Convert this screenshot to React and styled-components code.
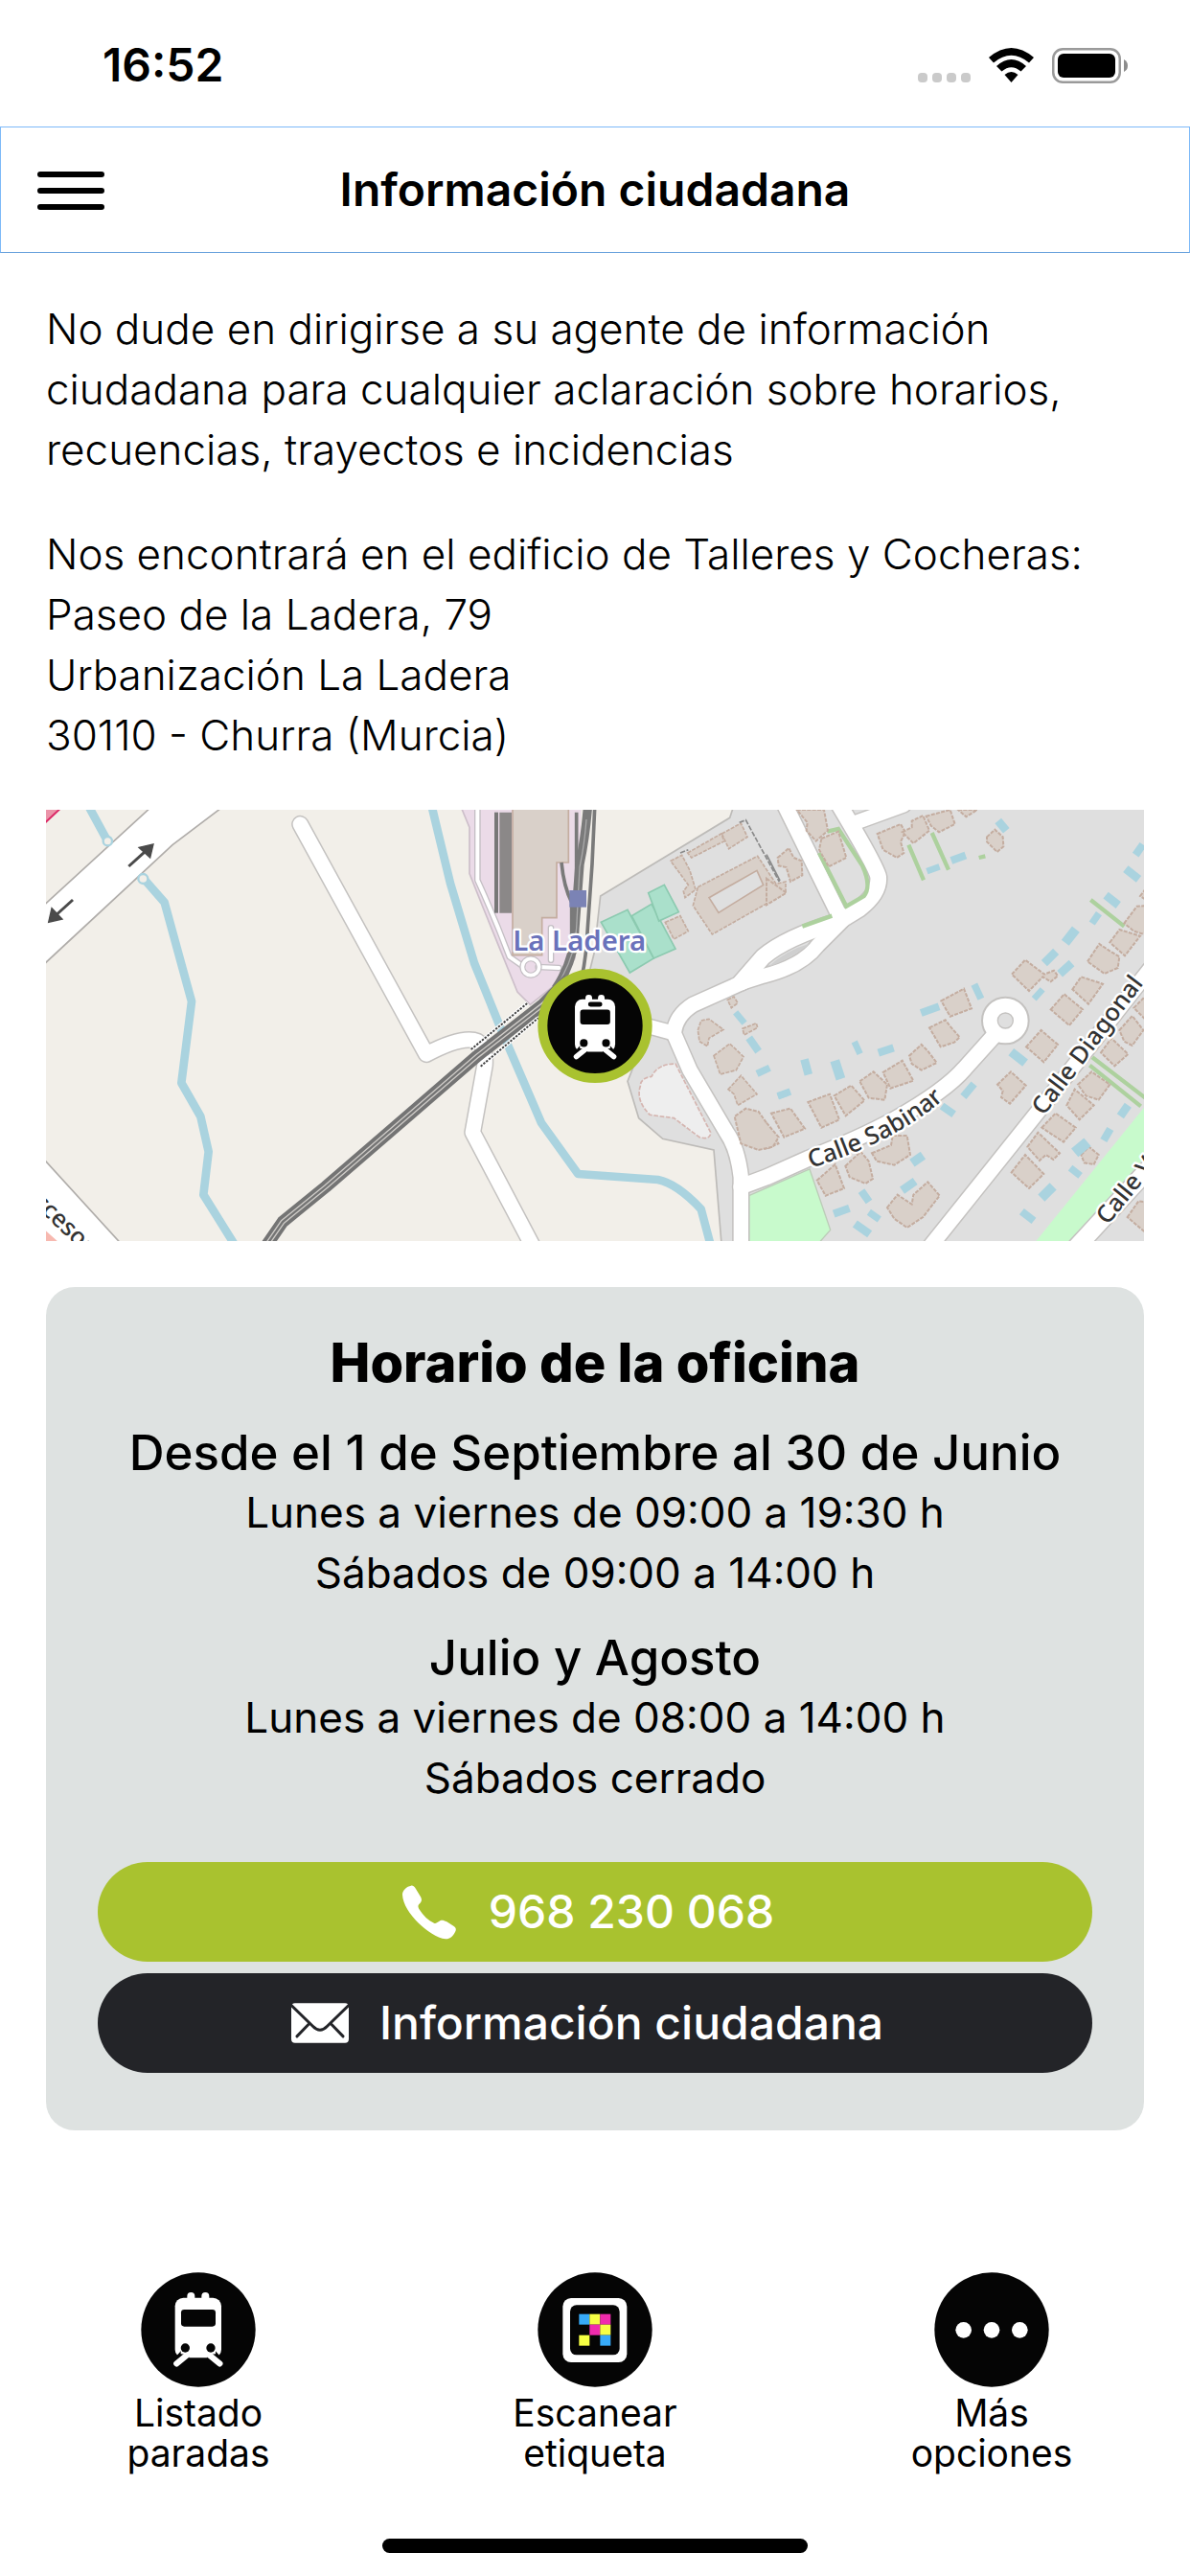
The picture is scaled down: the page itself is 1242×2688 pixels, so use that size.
import React from "react";
import styled, { createGlobalStyle } from "styled-components";

const GlobalStyle = createGlobalStyle`
  *, *::before, *::after { box-sizing: border-box; }
  body {
    margin: 0;
    background: #fff;
    color: #000;
    font-family: Inter, "Liberation Sans", sans-serif;
  }
`;

const Page = styled.div`
  display: flex;
  flex-direction: column;
  min-height: 100vh;
`;

const StatusBar = styled.div`
  display: flex;
  align-items: center;
  justify-content: space-between;
  height: 132px;
  padding: 4px 65px 0 107px;
`;

const Clock = styled.time`
  font-size: 48px;
  line-height: 60px;
  font-weight: 600;
`;

const Header = styled.header`
  display: grid;
  grid-template-columns: 112px 1fr 112px;
  align-items: center;
  height: 132px;
  border: 1px solid #7db9f8;
  border-bottom-color: #68a1dc;
`;

const MenuButton = styled.button`
  display: flex;
  align-items: center;
  justify-content: flex-end;
  height: 100%;
  padding: 2px 3px 0 0;
  border: 0;
  background: none;
  color: #000;
`;

const Title = styled.h1`
  margin: 0;
  text-align: center;
  font-size: 48px;
  line-height: 64px;
  font-weight: 600;
`;

const Content = styled.main`
  padding: 48px;
`;

const Paragraph = styled.p`
  margin: 0 0 46px;
  font-size: 44px;
  line-height: 63px;
  font-weight: 300;
`;

const Address = styled(Paragraph).attrs({ as: "address" })`
  font-style: normal;
`;

const MapView = styled.svg`
  display: block;
  width: 100%;
  height: 450px;
  margin-bottom: 48px;
`;

const StreetName = styled.text`
  font-family: "Noto Sans", "DejaVu Sans", sans-serif;
  font-size: 76px;
  font-weight: 500;
  fill: ${(p) => p.$fill || "#333"};
  stroke: #fff;
  stroke-width: 14px;
  stroke-linejoin: round;
  paint-order: stroke;
`;

const StationName = styled(StreetName)`
  font-size: 88px;
  font-weight: 600;
`;

const Card = styled.section`
  padding: 46px 54px 60px;
  border-radius: 30px;
  background: #dee2e1;
  text-align: center;
`;

const CardTitle = styled.h2`
  margin: 0 0 29px;
  font-size: 56px;
  line-height: 66px;
  font-weight: 800;
`;

const Season = styled.div`
  margin-bottom: 25px;
`;

const SeasonTitle = styled.h3`
  margin: 0;
  font-size: 51px;
  line-height: 63px;
  font-weight: 500;
`;

const Hours = styled.p`
  margin: 0;
  font-size: 44px;
  line-height: 63px;
  font-weight: 400;
`;

const Actions = styled.div`
  display: flex;
  flex-direction: column;
  gap: 12px;
  padding-top: 31px;
`;

const ActionLink = styled.a`
  display: flex;
  align-items: center;
  justify-content: center;
  gap: 32px;
  height: 104px;
  padding-right: 16px;
  border-radius: 52px;
  background: ${(p) => p.$background};
  color: #fff;
  font-size: 48px;
  line-height: 64px;
  font-weight: 500;
  text-decoration: none;
`;

const TabBar = styled.nav`
  display: grid;
  grid-template-columns: repeat(3, 1fr);
  margin-top: auto;
  padding-bottom: 68px;
`;

const TabButton = styled.button`
  display: flex;
  flex-direction: column;
  align-items: center;
  gap: 6px;
  padding: 0;
  border: 0;
  background: none;
  color: #000;
  font-family: inherit;
  font-size: 39px;
  line-height: 42px;
`;

const TabLabel = styled.span`
  width: min-content;
`;

const HomeIndicator = styled.div`
  align-self: center;
  width: 444px;
  max-width: 60%;
  height: 15px;
  margin-bottom: 24px;
  border-radius: 8px;
  background: #000;
`;

function StatusIcons() {
  return (
    <svg width="219" height="37" viewBox="958 49 219 37" aria-hidden="true">
      {[958, 973, 988, 1003].map((x) => (
        <rect key={x} x={x} y="75" width="10" height="10" rx="4" fill="#cacaca" />
      ))}
      <path d="M1032 59Q1055.500 39 1079 59L1074 64.500Q1055.500 49 1037 64.500Z" />
      <path d="M1040 68Q1055.500 54 1071 68L1065.500 73.500Q1055.500 65 1045.500 73.500Z" />
      <path d="M1048.500 77Q1055.500 71 1062.500 77L1055.500 85Z" />
      <rect x="1099.250" y="50.250" width="69.500" height="34.500" rx="10" fill="none" stroke="#9a9a9a" strokeWidth="2.500" />
      <rect x="1104" y="55" width="60" height="25" rx="6" />
      <path d="M1173 61Q1177 63 1177 67.500T1173 74Z" fill="#8c8c8c" />
    </svg>
  );
}

function MenuIcon() {
  return (
    <svg width="72" height="42" viewBox="0 0 72 42" stroke="currentColor" strokeWidth="6" strokeLinecap="round" aria-hidden="true">
      <path d="M4 4H68M4 21H68M4 38H68" />
    </svg>
  );
}

function PhoneIcon() {
  return (
    <svg width="60" height="57" viewBox="375 82 180 171" fill="currentColor" aria-hidden="true">
      <path d="M381 112C381 98 395 86 408 84C415 83 419 88 423 94L438 119C444 130 440 136 433 142C429 146 430 151 433 157C446 178 462 193 480 201C488 204 492 197 500 193C506 191 512 193 520 197L541 210C550 216 550 222 546 229C538 244 528 252 516 251C490 249 455 225 430 200C405 174 382 142 381 112Z" />
    </svg>
  );
}

function MailIcon({ line }) {
  return (
    <svg width="60" height="42" viewBox="50 447 182 126" aria-hidden="true">
      <rect x="50" y="447" width="182" height="126" rx="12" fill="currentColor" />
      <g fill="none" stroke={line} strokeWidth="9">
        <path d="M48 452L118 520Q141 544 164 520L234 452" />
        <path d="M105 514L68 552M177 514L214 552" strokeLinecap="round" />
      </g>
    </svg>
  );
}

function TramShape({ roofSlot }) {
  return (
    <>
      <rect x="107" y="80" width="145" height="188" rx="26" fill="#fff" />
      <path d="M157 75V90M202 75V90" stroke="#fff" strokeWidth="24" strokeLinecap="round" />
      <path d="M140 256L113 286M219 256L246 286" stroke="#050505" strokeWidth="34" />
      <path d="M144 260L112 286M215 260L247 286" stroke="#fff" strokeWidth="19" strokeLinecap="round" />
      <path d="M125 225H234V256Q180 264 125 256Z" fill="#fff" />
      {roofSlot && <path d="M163 98H197" stroke="#050505" strokeWidth="17" strokeLinecap="round" />}
      <rect x="126" y="117" width="108" height="53" rx="10" fill="#050505" />
      <circle cx="139" cy="237" r="14" fill="#050505" />
      <circle cx="219" cy="237" r="14" fill="#050505" />
    </>
  );
}

function TramIcon() {
  return (
    <svg width="120" height="120" viewBox="0 0 360 360" aria-hidden="true">
      <circle cx="180" cy="180" r="179" fill="#050505" />
      <TramShape />
    </svg>
  );
}

const CODE_CELLS = [
  [0, 0, "#37aaf8"], [1, 0, "#f6ff43"], [2, 0, "#f02bad"],
  [1, 1, "#f02bad"], [2, 1, "#f6ff43"],
  [0, 2, "#f6ff43"], [2, 2, "#37aaf8"],
];

function ScanIcon() {
  return (
    <svg width="120" height="120" viewBox="0 0 360 360" aria-hidden="true">
      <circle cx="180" cy="180" r="179" fill="#050505" />
      <rect x="79" y="81" width="201" height="201" rx="26" fill="#fff" />
      <rect x="102" y="103" width="155" height="156" rx="20" fill="#050505" />
      {CODE_CELLS.map(([x, y, fill]) => (
        <rect key={`${x}${y}`} x={130 + x * 33} y={131 + y * 33} width="33" height="33" fill={fill} />
      ))}
    </svg>
  );
}

function MoreIcon() {
  return (
    <svg width="120" height="120" viewBox="0 0 360 360" aria-hidden="true">
      <circle cx="180" cy="180" r="179" fill="#050505" />
      {[92, 180, 268].map((x) => (
        <circle key={x} cx={x} cy="181" r="25" fill="#fff" />
      ))}
    </svg>
  );
}

const WEST = "translate(-24 -30)";
const CENTER = "translate(1116 -30)";
const EAST = "translate(2256 -30)";

const ROADS = [
  [CENTER, "M-320 75L75 795Q190 735 235 755Q262 770 258 830L220 1040L410 1400", 46],
  [CENTER, "M760 705L845 728", 44],
  [CENTER, "M1060 1400V1180Q1050 1090 1015 1040L900 845L850 730Q855 675 910 640L1070 568", 46],
  [EAST, "M-80 570L-10 490Q60 430 225 380L290 340Q355 290 350 240Q345 210 225 10", 50],
  [EAST, "M-80 572L-10 550Q110 520 160 455L235 380", 44],
  [EAST, "M55 10L235 375", 48],
  [EAST, "M265 75L430 15", 44],
  [EAST, "M-80 1210L0 1180L130 1122Q290 1060 400 1000Q560 910 620 840L710 740", 48],
  [EAST, "M510 1400L850 975L1200 530", 46],
  [EAST, "M970 1400L1200 1150", 54],
];

const EAST_BUILDINGS = [
  "95,30 180,30 192,95 155,128 125,95 128,70", "172,120 225,98 250,180 195,208 165,155",
  "35,180 70,150 85,180 110,190 112,235 75,255 62,210 38,205", "0,245 62,290 0,328",
  "347,105 420,75 435,100 420,130 430,165 408,180 365,155", "425,100 455,85 455,65 490,48 510,95 460,135",
  "500,50 575,30 590,75 540,100 515,80", "600,30 660,30 625,52",
  "690,115 715,92 740,115 742,145 722,162 690,130",
  "768,545 810,500 870,545 900,533 912,550 890,568 865,553 822,597",
  "547,628 618,590 642,652 575,677", "510,712 560,688 577,710 605,742 588,758 545,772",
  "447,800 485,765 505,785 533,822 485,845 455,825", "365,852 425,815 460,878 388,902",
  "292,880 335,850 378,890 370,938 320,932", "212,925 265,893 307,940 248,988",
  "130,945 198,920 228,1000 172,1025", "15,980 75,965 120,1028 55,1055",
  "0,1010 38,1055 20,1085 -25,1095 -80,1075 -100,990 -65,965 -25,975",
  "1005,505 1042,450 1075,472 1105,490 1100,525 1058,543", "1075,445 1105,405 1170,425 1122,487",
  "1120,385 1160,332 1200,330 1200,425 1150,410", "958,592 985,553 1053,575 1008,638",
  "890,655 932,607 990,655 948,705", "813,772 860,720 912,765 868,820",
  "723,890 765,850 812,893 762,950 735,930 740,910", "1047,790 1080,745 1132,795 1090,832",
  "1105,720 1145,675 1180,720 1145,768 1120,755", "1150,650 1200,600 1200,700",
  "975,890 1018,850 1075,890 1040,938 1000,925", "940,955 965,905 1025,955 980,1000",
  "862,1025 905,980 968,1025 930,1070", "817,1085 850,1040 918,1105 898,1125 875,1110 855,1128",
  "767,1165 810,1110 868,1170 822,1215", "158,1190 215,1140 243,1215 185,1238",
  "247,1145 295,1100 320,1130 333,1185 310,1200 260,1180", "330,1105 390,1080 395,1050 440,1050 450,1110 400,1142 345,1130",
  "378,1275 410,1235 455,1265 460,1235 505,1195 542,1238 490,1305 440,1338 400,1310",
  "985,1110 1010,1085 1040,1110 1025,1140 995,1135", "1130,1305 1165,1255 1200,1260 1200,1365",
  "1170,300 1200,260 1200,320",
];

const CENTER_BUILDINGS = [
  "1000,105 1060,72 1080,115 1022,152", "893,165 998,105 1008,128 905,180",
  "823,382 870,362 895,410 850,435", "840,190 875,172 900,220 918,280 885,305 880,285 895,265",
  "925,272 1112,175 1170,262 1200,255 1200,290 970,420 910,330",
  "1018,625 1038,615 1050,635 1030,650", "1065,715 1108,698 1112,712 1070,735",
  "925,720 935,690 960,685 1005,718 960,745 955,770 930,755", "975,800 1025,762 1068,803 1045,845 995,858",
  "1020,905 1060,862 1110,920 1050,955 1038,920", "1092,1050 1135,1012 1178,1075 1140,1092 1105,1085",
];

const POOLS = [
  [738, 80, 40, 26, 50], [601, 181, 48, 24, -20], [522, 215, 42, 20, -20], [1167, 155, 40, 24, -55],
  [1145, 231, 52, 26, 38], [1082, 313, 50, 26, 38], [1030, 370, 38, 22, -55], [952, 425, 54, 30, -52],
  [888, 492, 52, 26, -45], [937, 527, 50, 26, -42], [851, 607, 40, 20, -48], [661, 599, 50, 22, 65],
  [512, 656, 60, 24, -20], [284, 775, 42, 20, 65], [374, 783, 50, 24, -18], [125, 835, 50, 26, 75],
  [223, 844, 60, 30, 72], [55, 919, 42, 22, -20], [788, 805, 56, 28, 38], [633, 908, 52, 24, -50],
  [568, 970, 46, 24, 35], [1120, 972, 42, 26, -55], [1066, 1047, 42, 24, -60], [985, 1087, 52, 34, -40],
  [967, 1163, 40, 22, 38], [879, 1227, 52, 30, -45], [818, 1302, 48, 24, 38], [473, 1124, 42, 28, -35],
  [445, 1207, 50, 26, -35], [309, 1240, 42, 24, 55], [235, 1286, 52, 24, -20], [337, 1301, 40, 22, 35],
  [300, 1342, 56, 26, 35], [-83, 681, 44, 20, 50], [-40, 765, 52, 24, 55], [-10, 847, 44, 22, -25],
  [50, 922, 30, 20, -20],
];

const HEDGES =
  "M190 98L225 90L300 205Q330 270 305 300L250 332L165 165M112 395L205 362M445 140L492 250M518 102L570 218M665 180L685 175M1015 312L1120 395M1020 805L1190 935M1012 830L1172 958";

const MAIN_TRACK = "M-430 1400L-375 1320L-240 1210L0 1003L235 800L440 640L520 560";

function OfficeMap() {
  return (
    <MapView viewBox="0 0 3438 1350" preserveAspectRatio="xMidYMid slice" role="img" aria-label="Mapa de La Ladera">
      <defs>
        <path id="sabinar" d="M2395 1122Q2600 1055 2720 975Q2800 925 2860 855" />
      </defs>
      <rect width="3438" height="1350" fill="#f2efe9" />

      <g transform={CENTER}>
        <path d="M1035 25L1025 55L620 300L600 480L570 600L745 780L705 880L740 995L815 1060L975 1095L1000 1400H2400V20Z" fill="#dfdfdf" stroke="#bdbbb8" strokeWidth="5" />
        <path d="M185 25L210 85V230L250 330L360 600L400 640L500 560L580 430L600 25Z" fill="#ebdbe8" stroke="#cdbfca" strokeWidth="5" />
        <path d="M560 25H615L590 250L570 560H540Z" fill="#f2efe9" />
        <path d="M855 825L965 1040Q965 1065 930 1055L850 995L775 985Q730 940 745 895Q745 870 780 865Q800 825 855 825Z" fill="#eee" stroke="#d5b5b0" strokeWidth="5" strokeDasharray="14 5" />
      </g>
      <g transform={EAST} fill="#c8facc">
        <path d="M-55 1238L135 1155L200 1345L165 1385H-55Z" stroke="#bcccb8" strokeWidth="4" />
        <path d="M1200 940L840 1385H950L1200 1100Z" />
      </g>

      <g fill="none" stroke="#aad3df" strokeWidth="26" strokeLinejoin="round">
        <path transform={WEST} d="M158 20L215 125M325 240L395 320L480 630L448 885L508 990L533 1100L517 1235L620 1400" />
        <path transform={CENTER} d="M92 20L150 260L225 510L310 720L435 1010L550 1170L800 1188Q860 1200 935 1280L967 1400" />
      </g>

      <g transform={WEST}>
        <path d="M0 345L360 15H585L420 140L0 530Z" fill="#fff" stroke="#b0adaa" strokeWidth="5" />
        <path d="M0 1105L265 1395H0Z" fill="#fff" stroke="#b0adaa" strokeWidth="5" />
        <path d="M20 1345L65 1385H20Z" fill="#f7b9b0" />
        <path d="M20 25H70L20 72Z" fill="#eb94a9" stroke="#dc2a67" strokeWidth="6" />
        <circle cx="217" cy="128" r="14" fill="#f2efe9" stroke="#aad3df" strokeWidth="7" />
        <circle cx="328" cy="246" r="15" fill="#f2efe9" stroke="#aad3df" strokeWidth="7" />
        <g stroke="#4a4a4a" strokeWidth="9" fill="#4a4a4a">
          <path d="M283 207L335 160" />
          <path d="M315 148L360 138L350 180Z" strokeWidth="4" />
          <path d="M108 312L55 360" />
          <path d="M32 382L42 338L75 372Z" strokeWidth="4" />
        </g>
      </g>

      <g fill="none" strokeLinecap="round" strokeLinejoin="round">
        {ROADS.map(([transform, d, w]) => (
          <path key={d} transform={transform} d={d} stroke="#c4c2c0" strokeWidth={w + 9} />
        ))}
        <circle transform={EAST} cx="748" cy="690" r="49" stroke="#c4c2c0" strokeWidth="54" />
        {ROADS.map(([transform, d, w]) => (
          <path key={d} transform={transform} d={d} stroke="#fff" strokeWidth={w} />
        ))}
        <circle transform={EAST} cx="748" cy="690" r="48" stroke="#fff" strokeWidth="44" />
        <g transform={CENTER}>
          <path d="M235 25V250Q290 370 335 490L375 518M425 522L490 525M465 400V500" stroke="#c4bfc4" strokeWidth="20" />
          <path d="M235 25V250Q290 370 335 490L375 518M425 522L490 525M465 400V500" stroke="#fff" strokeWidth="12" />
          <circle cx="402" cy="522" r="26" stroke="#c4bfc4" strokeWidth="18" />
          <circle cx="402" cy="522" r="26" stroke="#fff" strokeWidth="11" />
        </g>
      </g>
      <path transform={EAST} d="M5 522Q60 470 140 448Q70 500 5 522Z" fill="#cfcfcf" />

      <g transform={CENTER} stroke="#c4ada0" strokeWidth="5" fill="#d9d0c9">
        <path d="M345 25H520V195H483V368H437V485H345Z" />
        {CENTER_BUILDINGS.map((points) => (
          <polygon key={points} points={points} strokeDasharray="12 4" />
        ))}
        <path d="M960 305L1110 220L1130 265L990 352Z" fill="#dfdfdf" />
        <g fill="#aae0cb" stroke="#8ccab0">
          <path d="M622 382L705 343L787 495L712 540Z" />
          <path d="M718 362L780 325L855 465L787 495Z" />
          <path d="M770 290L820 265L865 350L803 378Z" />
        </g>
        <path d="M870 165L895 155M1055 70L1075 62L1180 255" fill="none" stroke="#8a8a8a" strokeDasharray="16 5" />
      </g>

      <g transform={EAST}>
        <path d="M0 170L42 252" stroke="#8a8a8a" strokeWidth="5" />
        <path d={HEDGES} fill="none" stroke="#add19e" strokeWidth="13" />
        {EAST_BUILDINGS.map((points) => (
          <polygon key={points} points={points} fill="#d9d0c9" stroke="#c4ada0" strokeWidth="6" strokeDasharray="12 4" />
        ))}
        {POOLS.map(([x, y, w, h, angle]) => (
          <rect key={`${x}-${y}`} x={-w / 2} y={-h / 2} width={w} height={h} fill="#aad3df" transform={`translate(${x} ${y}) rotate(${angle})`} />
        ))}
      </g>

      <g transform={CENTER} fill="none">
        <path d="M294 38V353" stroke="#777" strokeWidth="12" />
        <path d="M323 38V353" stroke="#8b8888" strokeWidth="38" />
        <path d="M498 195Q505 270 530 320V420M545 38V300M602 25L594 200L580 400Q575 500 560 560" stroke="#7a7a7a" strokeWidth="11" />
        <path d="M580 25Q572 120 555 200L540 400Q540 500 480 590" stroke="#7a7a7a" strokeWidth="28" />
        <path d="M576 60Q570 140 555 210L545 400Q540 490 490 570" stroke="#aaa" strokeWidth="4" />
        <path d={MAIN_TRACK} stroke="#747474" strokeWidth="38" strokeLinejoin="round" />
        <path d={MAIN_TRACK} stroke="#d0cdc9" strokeWidth="15" strokeLinejoin="round" />
        <path d={MAIN_TRACK} stroke="#747474" strokeWidth="7" strokeLinejoin="round" />
        <path d="M215 780L392 635M245 833L425 682" stroke="#fff" strokeWidth="12" />
        <path d="M215 780L392 635M245 833L425 682" stroke="#444" strokeWidth="6" strokeDasharray="7 4" />
        <rect x="523" y="282" width="53" height="53" fill="#7b83b5" />
      </g>

      <StationName $fill="#6a72bb" x="1462" y="440">La Ladera</StationName>
      <StreetName>
        <textPath href="#sabinar">Calle Sabinar</textPath>
      </StreetName>
      <StreetName transform="translate(3124 960) rotate(-53)">Calle Diagonal</StreetName>
      <StreetName transform="translate(3324 1302) rotate(-51)">Calle V</StreetName>
      <StreetName transform="translate(-44 1232) rotate(44)">ccesos</StreetName>

      <g>
        <circle cx="1719" cy="676" r="164" fill="#050505" stroke="#a9c22f" strokeWidth="30" />
        <g transform="translate(1563 524) scale(0.87)">
          <TramShape roofSlot />
        </g>
      </g>
    </MapView>
  );
}

const SEASONS = [
  {
    title: "Desde el 1 de Septiembre al 30 de Junio",
    hours: ["Lunes a viernes de 09:00 a 19:30 h", "Sábados de 09:00 a 14:00 h"],
  },
  {
    title: "Julio y Agosto",
    hours: ["Lunes a viernes de 08:00 a 14:00 h", "Sábados cerrado"],
  },
];

const TABS = [
  { label: "Listado paradas", Icon: TramIcon },
  { label: "Escanear etiqueta", Icon: ScanIcon },
  { label: "Más opciones", Icon: MoreIcon },
];

export default function App() {
  return (
    <Page>
      <GlobalStyle />
      <StatusBar>
        <Clock>16:52</Clock>
        <StatusIcons />
      </StatusBar>
      <Header>
        <MenuButton type="button" aria-label="Menú">
          <MenuIcon />
        </MenuButton>
        <Title>Información ciudadana</Title>
      </Header>
      <Content>
        <Paragraph>
          No dude en dirigirse a su agente de información ciudadana para cualquier aclaración sobre horarios,
          recuencias, trayectos e incidencias
        </Paragraph>
        <Address>
          Nos encontrará en el edificio de Talleres y Cocheras:
          <br />
          Paseo de la Ladera, 79
          <br />
          Urbanización La Ladera
          <br />
          30110 - Churra (Murcia)
        </Address>
        <OfficeMap />
        <Card>
          <CardTitle>Horario de la oficina</CardTitle>
          {SEASONS.map((season) => (
            <Season key={season.title}>
              <SeasonTitle>{season.title}</SeasonTitle>
              {season.hours.map((line) => (
                <Hours key={line}>{line}</Hours>
              ))}
            </Season>
          ))}
          <Actions>
            <ActionLink href="tel:968230068" $background="#a9c22f">
              <PhoneIcon />
              968 230 068
            </ActionLink>
            <ActionLink href="mailto:" $background="#232428">
              <MailIcon line="#232428" />
              Información ciudadana
            </ActionLink>
          </Actions>
        </Card>
      </Content>
      <TabBar>
        {TABS.map(({ label, Icon }) => (
          <TabButton key={label} type="button">
            <Icon />
            <TabLabel>{label}</TabLabel>
          </TabButton>
        ))}
      </TabBar>
      <HomeIndicator />
    </Page>
  );
}
